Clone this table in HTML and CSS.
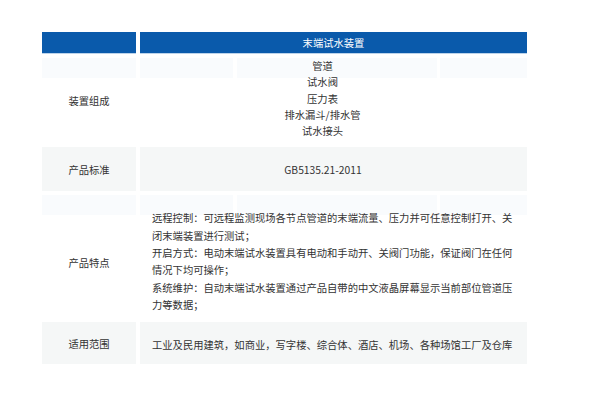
FILE: index.html
```html
<!DOCTYPE html>
<html lang="zh-CN">
<head>
<meta charset="utf-8">
<title>末端试水装置</title>
<link rel="stylesheet" href="styles.css">
</head>
<body>
<div class="spec">
  <div class="cell head"></div>
  <div class="cell head title">末端试水装置</div>

  <div class="cell label band-left">装置组成</div>
  <div class="cell value band-right parts">
    <div>管道</div>
    <div>试水阀</div>
    <div>压力表</div>
    <div>排水漏斗/排水管</div>
    <div>试水接头</div>
  </div>

  <div class="cell label shade">产品标准</div>
  <div class="cell value shade std">GB5135.21-2011</div>

  <div class="cell label band-left label-feat">产品特点</div>
  <div class="cell value band-right feat">
    <p>远程控制：可远程监测现场各节点管道的末端流量、压力并可任意控制打开、关闭末端装置进行测试；</p>
    <p>开启方式：电动末端试水装置具有电动和手动开、关阀门功能，保证阀门在任何情况下均可操作；</p>
    <p>系统维护：自动末端试水装置通过产品自带的中文液晶屏幕显示当前部位管道压力等数据；</p>
  </div>

  <div class="cell label shade">适用范围</div>
  <div class="cell value shade scope">工业及民用建筑，如商业，写字楼、综合体、酒店、机场、各种场馆工厂及仓库</div>
</div>
</body>
</html>
```

FILE: styles.css
```css
html, body {
  margin: 0;
  padding: 0;
  background: #ffffff;
}

body {
  font-family: "Noto Sans CJK SC", "Noto Sans", sans-serif;
  font-size: 10.3px;
  color: #333333;
}

.spec {
  display: grid;
  grid-template-columns: 94px 387px;
  column-gap: 4px;
  row-gap: 4px;
  margin: 32px 0 0 42px;
  width: 485px;
}

.cell {
  box-sizing: border-box;
}

.head {
  background: #0a5aab;
  height: 21px;
  margin-bottom: 1px;
  box-shadow: 0 1px 0 #bcd3ea;
}

.title {
  color: #ffffff;
  display: flex;
  align-items: center;
  justify-content: center;
  line-height: 21px;
}

.label {
  display: flex;
  align-items: center;
  justify-content: center;
}

.label-feat {
  padding-top: 12px;
}

.shade {
  background: #f5f7f7;
}

.band-left {
  background: linear-gradient(#f9fbfd, #f9fbfd) 0 0 / 100% 20px no-repeat, #ffffff;
}

.band-right {
  background:
    linear-gradient(#f9fbfd, #f9fbfd) 0 0 / 93px 20px no-repeat,
    linear-gradient(#f9fbfd, #f9fbfd) 97px 0 / 200px 20px no-repeat,
    linear-gradient(#f9fbfd, #f9fbfd) 300px 0 / 87px 20px no-repeat,
    #ffffff;
}

.parts {
  text-align: center;
  line-height: 16.3px;
  padding: 0 22px 4px 0;
}

.std {
  height: 44px;
  display: flex;
  align-items: center;
  justify-content: center;
  padding-right: 21px;
}

.feat {
  padding: 14px 10px 5px 12px;
  line-height: 17.3px;
}

.feat p {
  margin: 0;
}

.scope {
  height: 42px;
  display: flex;
  align-items: center;
  white-space: nowrap;
  padding: 2px 8px 0 12px;
}
```
